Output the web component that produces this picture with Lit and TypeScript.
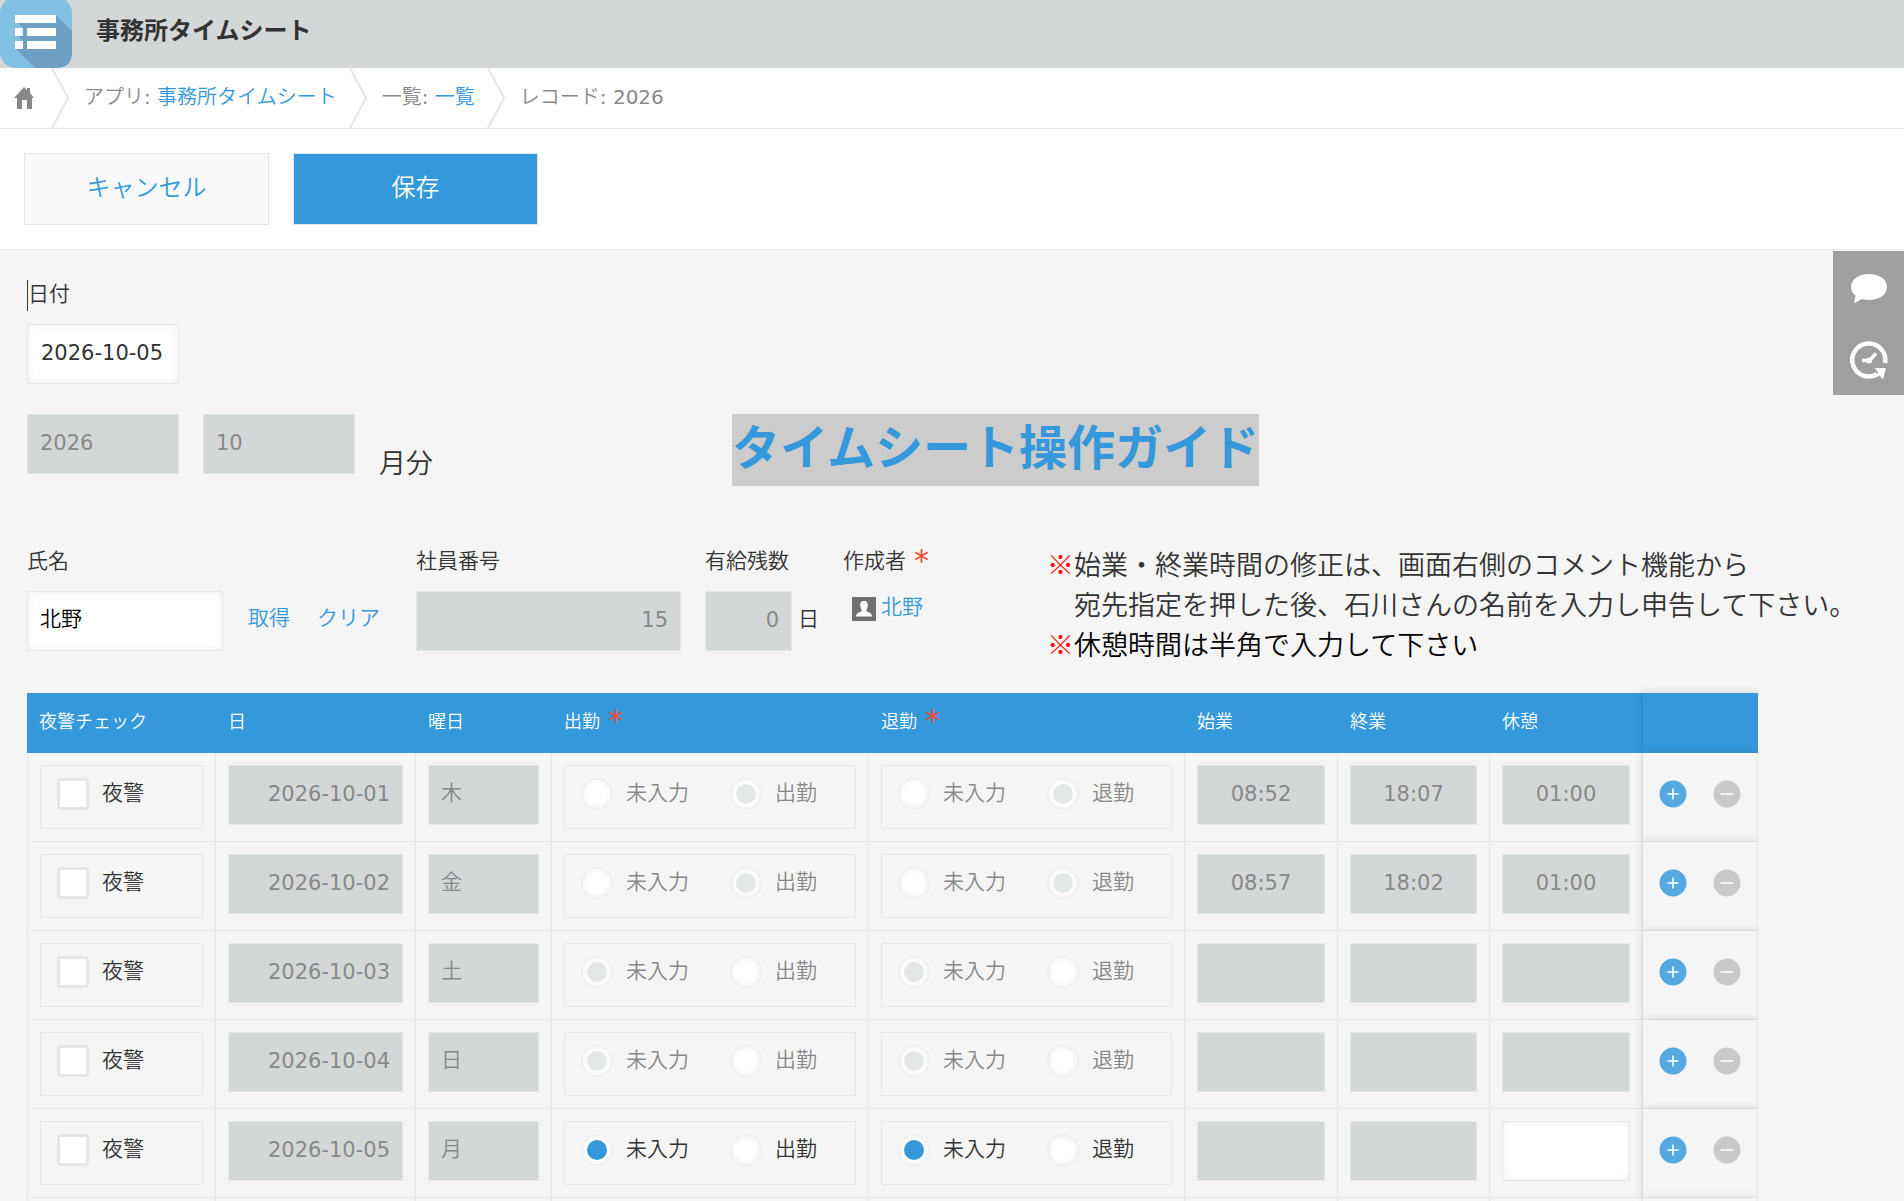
import { LitElement, html, css, svg } from "lit";
import { customElement } from "lit/decorators.js";

interface DayRow {
  date: string;
  weekday: string;
  /** true once the clock-in and clock-out have been recorded */
  done: boolean;
  editable: boolean;
  start: string;
  end: string;
  rest: string;
}

const ROWS: DayRow[] = [
  { date: "2026-10-01", weekday: "木", done: true, editable: false, start: "08:52", end: "18:07", rest: "01:00" },
  { date: "2026-10-02", weekday: "金", done: true, editable: false, start: "08:57", end: "18:02", rest: "01:00" },
  { date: "2026-10-03", weekday: "土", done: false, editable: false, start: "", end: "", rest: "" },
  { date: "2026-10-04", weekday: "日", done: false, editable: false, start: "", end: "", rest: "" },
  { date: "2026-10-05", weekday: "月", done: false, editable: true, start: "", end: "", rest: "" },
];

const appIcon = svg`
  <svg class="app-icon" viewBox="0 0 72 68" aria-hidden="true">
    <rect y="-3" width="72" height="71" rx="16" fill="#82c0e6"/>
    <path d="M56 15 72 31V52Q72 68 56 68H35L15 48 15 23Z" fill="#6c9fc3"/>
    <path d="M15 23H18L23 28H15ZM15 36H18L23 41H15Z" fill="#82c0e6"/>
    <path d="M15 15H56V23H15ZM15 28H23V36H15ZM27 28H56V36H27ZM15 41H23V49H15ZM27 41H56V49H27Z" fill="#fff"/>
  </svg>`;

const chevron = svg`
  <svg class="chevron" viewBox="0 0 18 60" aria-hidden="true">
    <path d="M1 0 17 30 1 60" fill="none" stroke="#e3e7e8" stroke-width="2"/>
  </svg>`;

@customElement("app-root")
export class AppRoot extends LitElement {
  static styles = css`
    :host {
      display: block;
      min-height: 100vh;
      overflow: hidden;
      background: #f5f5f5;
      color: #333;
      font-family: "DejaVu Sans", "Noto Sans CJK JP DemiLight", "Noto Sans CJK JP Light", "Noto Sans CJK JP", sans-serif;
      font-size: 21px;
      line-height: 31px;
    }
    *, *::before, *::after { box-sizing: border-box; }
    a { color: #3498db; text-decoration: none; }
    input, button { font: inherit; margin: 0; }

    .header { display: flex; height: 68px; background: #d4d7d7; }
    .app-icon { width: 72px; height: 68px; }
    .title {
      margin: 0; padding: 13px 24px; font-size: 24px; line-height: 36px;
      font-family: "DejaVu Sans", "Noto Sans CJK JP", sans-serif;
    }

    .crumbs {
      display: flex; height: 61px; background: #fff; color: #888;
      border-bottom: 1px solid #e3e7e8; font-size: 20px; line-height: 58px; white-space: nowrap;
    }
    .home { display: flex; align-items: center; padding: 0 17px 0 14px; }
    .home svg { width: 20px; height: 22px; }
    .chevron { width: 18px; height: 60px; flex: none; }
    .crumb { padding: 0 12px 0 15px; }

    .toolbar {
      display: flex; gap: 24px; padding: 24px; background: #fff; border-bottom: 1px solid #e3e7e8;
    }
    .button {
      width: 245px; height: 72px; padding: 0 0 2px; border: 1px solid #e3e7e8;
      background: #f7f9fa; color: #3498db; font-size: 24px;
    }
    .primary { background: #3498db; color: #fff; }

    .body { position: relative; padding: 30px 0 0 27px; }
    .side {
      position: absolute; top: 1px; right: 0; width: 71px; padding: 23px 0 16px;
      display: flex; flex-direction: column; align-items: center; gap: 37px; background: #9f9f9f;
    }
    .side button { display: block; padding: 0; border: 0; background: none; }
    .side svg { display: block; width: 38px; height: 30px; }
    .side .clock { height: 38px; }

    .label { display: block; margin-bottom: 13px; line-height: 29px; padding-bottom: 2px; }
    .caret { border-left: 1px solid #333; height: 31px; width: max-content; padding: 0; }
    .caret label { display: block; }
    .box {
      display: block; width: 100%; height: 60px; padding: 0 12px 2px; border: 1px solid #e3e7e8; border-radius: 0;
      background: #fff; color: #333; box-shadow: inset 0 0 9px #eee; outline: 0;
    }
    .box:disabled { background: #d4d7d7; color: #888; box-shadow: none; opacity: 1; }
    .box.kanji { padding: 0 12px 8px; }
    .box.name { color: #000; }
    .box.date { padding: 0 13px 3px; }
    .right { text-align: right; }
    .center { text-align: center; }
    .w-date { width: 152px; }
    .w-name { width: 196px; }
    .w-number { width: 265px; }
    .w-days { width: 87px; }
    .w-author { width: 180px; }

    .period { display: flex; gap: 24px; margin-top: 30px; }
    .suffix { font-size: 27px; line-height: 36px; padding-top: 32px; }
    .guide {
      margin-left: 275px; height: 72px; background: #ccc; font-size: 48px; font-weight: 700; line-height: 60px;
      font-family: "Noto Sans CJK JP", sans-serif;
    }

    .person { display: flex; flex-wrap: wrap; column-gap: 24px; margin-top: 61px; }
    .links { display: flex; align-items: flex-start; gap: 27px; padding: 56px 12px 0 1px; }
    .links button { padding: 0; border: 0; background: none; color: #3498db; }
    .with-unit { display: flex; align-items: center; gap: 6px; }
    .unit { padding-bottom: 4px; }
    .star {
      color: #e74c3c; padding-left: 8px; font-size: 30px; line-height: 0; vertical-align: -3px;
      font-family: "DejaVu Sans", sans-serif;
    }
    .author { display: flex; gap: 5px; padding-left: 9px; line-height: 33px; }
    .author svg { width: 24px; height: 24px; margin-top: 6px; }
    .notes {
      margin: -3px 0 0; font-size: 27px; line-height: 40px; height: 123px; white-space: nowrap;
      font-family: "Noto Sans CJK JP DemiLight", "Noto Sans CJK JP Light", "Noto Sans CJK JP", sans-serif;
    }
    .notes p { margin: 0; }
    .notes .indent { padding-left: 27px; }
    .notes .black { color: #000; }
    .notes mark { background: none; color: #f00; }

    .grid { padding: 26px 146px 0 0; }
    .table { width: 100%; table-layout: fixed; border-collapse: separate; border-spacing: 0; }
    .c1 { width: 189px; } .c2 { width: 200px; } .c3 { width: 136px; } .c4 { width: 317px; } .c5 { width: 316px; }
    .c6, .c8 { width: 153px; } .c7 { width: 152px; } .c9 { width: 115px; }
    .table th, .table .corner {
      height: 60px; padding: 0 12px 3px; background: #3498db; color: #fff; text-align: left;
      font-size: 18px; line-height: 26px; font-weight: 400;
    }
    .table td {
      height: 89px; padding: 12px; vertical-align: top;
      border-right: 1px solid #e3e7e8; border-bottom: 1px solid #e3e7e8;
    }
    .table td:first-child { border-left: 1px solid #e3e7e8; }
    .table .tail td { height: 3px; padding: 0; border-bottom: 0; }
    .table .corner { border: 0; }
    .table .ops, .table .corner {
      position: relative; box-shadow: 0 0 9px rgba(0, 0, 0, 0.14); clip-path: inset(-9px 0 0 -10px);
    }
    .table .ops { background: #f5f5f5; }

    .frame { display: flex; height: 64px; border: 1px solid #e3e7e8; padding: 12px 16px; }
    .choice { display: flex; align-items: flex-start; gap: 13px; line-height: 30px; white-space: nowrap; }
    .frame .choice + .choice { margin-left: 41px; }
    .off { color: #888; }
    .radio, .check { appearance: none; flex: none; width: 32px; height: 32px; background: #fff; }
    .radio {
      display: grid; place-items: center; border: 1px solid #e8eaea; border-radius: 50%;
      box-shadow: inset 0 0 6px #e8e8e8;
    }
    .radio:checked::before { content: ""; width: 20px; height: 20px; border-radius: 50%; background: #3498db; }
    .radio:disabled:checked::before { background: #e3e7e7; }
    .check { border: 3px solid #e6e6e6; border-radius: 3px; }

    .op-row { display: flex; gap: 26px; padding: 15px 0 0 4px; }
    .op { display: block; width: 28px; height: 28px; padding: 0; border: 0; background: none; }
    .op svg { display: block; width: 28px; height: 28px; }
  `;

  private attendance(row: DayRow, kind: string) {
    const name = `${kind}-${row.date}`;
    const off = !row.editable;
    return html`<div class="frame" role="radiogroup" aria-label=${kind}>
      <label class="choice ${off ? "off" : ""}"
        ><input class="radio" type="radio" name=${name} ?checked=${!row.done} ?disabled=${off} />未入力</label
      >
      <label class="choice ${off ? "off" : ""}"
        ><input class="radio" type="radio" name=${name} ?checked=${row.done} ?disabled=${off} />${kind}</label
      >
    </div>`;
  }

  private row(row: DayRow) {
    return html`<tr>
      <td>
        <div class="frame"><label class="choice"><input class="check" type="checkbox" />夜警</label></div>
      </td>
      <td><input class="box right" aria-label="日" .value=${row.date} disabled /></td>
      <td><input class="box kanji" aria-label="曜日" .value=${row.weekday} disabled /></td>
      <td>${this.attendance(row, "出勤")}</td>
      <td>${this.attendance(row, "退勤")}</td>
      <td><input class="box center" aria-label="始業" .value=${row.start} disabled /></td>
      <td><input class="box center" aria-label="終業" .value=${row.end} disabled /></td>
      <td><input class="box center" aria-label="休憩" .value=${row.rest} ?disabled=${!row.editable} /></td>
      <td class="ops">
        <div class="op-row">
          <button class="op" aria-label="行を追加">
            <svg viewBox="0 0 28 28">
              <circle cx="14" cy="14" r="13.5" fill="#56a9e0" />
              <path d="M14 8.500V19.500M8.500 14H19.500" stroke="#fff" stroke-width="1.600" />
            </svg>
          </button>
          <button class="op" aria-label="行を削除">
            <svg viewBox="0 0 28 28">
              <circle cx="14" cy="14" r="13.5" fill="#c9c9c9" />
              <path d="M7.500 14H20.500" stroke="#fff" stroke-width="1.600" />
            </svg>
          </button>
        </div>
      </td>
    </tr>`;
  }

  render() {
    const star = html`<span class="star">*</span>`;
    return html`
      <header class="header">
        ${appIcon}
        <h1 class="title">事務所タイムシート</h1>
      </header>
      <nav class="crumbs">
        <a class="home" href="#" aria-label="ホーム">
          <svg viewBox="0 0 20 22">
            <path d="M10 0 13 3V1H16V6L20 11H18V22H13V13H8V22H3V11H0Z" fill="#888" />
          </svg>
        </a>
        ${chevron}
        <span class="crumb">アプリ: <a href="#">事務所タイムシート</a></span>
        ${chevron}
        <span class="crumb">一覧: <a href="#">一覧</a></span>
        ${chevron}
        <span class="crumb">レコード: 2026</span>
      </nav>
      <div class="toolbar">
        <button class="button">キャンセル</button>
        <button class="button primary">保存</button>
      </div>
      <main class="body">
        <div class="w-date">
          <div class="label caret"><label for="date">日付</label></div>
          <input class="box date" id="date" .value=${"2026-10-05"} />
        </div>
        <div class="period">
          <div class="w-date"><input class="box" aria-label="年" .value=${"2026"} disabled /></div>
          <div class="w-date"><input class="box" aria-label="月" .value=${"10"} disabled /></div>
          <span class="suffix">月分</span>
          <a class="guide" href="#">タイムシート操作ガイド</a>
        </div>
        <div class="person">
          <div class="w-name">
            <label class="label" for="name">氏名</label>
            <input class="box kanji name" id="name" .value=${"北野"} />
          </div>
          <div class="links"><button>取得</button><button>クリア</button></div>
          <div class="w-number">
            <label class="label" for="number">社員番号</label>
            <input class="box right" id="number" .value=${"15"} disabled />
          </div>
          <div>
            <label class="label" for="days">有給残数</label>
            <div class="with-unit">
              <div class="w-days"><input class="box right" id="days" .value=${"0"} disabled /></div>
              <span class="unit">日</span>
            </div>
          </div>
          <div class="w-author">
            <span class="label">作成者${star}</span>
            <div class="author">
              <svg viewBox="0 0 24 24" aria-hidden="true">
                <rect width="24" height="24" fill="#6f7272" />
                <path
                  d="M12 4C15 4 16 6 15.800 9 15.600 11 14.500 12 14.300 13.500 14.300 15.500 20 15 20 19.500H4C4 15 9.700 15.500 9.700 13.500 9.500 12 8.400 11 8.200 9 8 6 9 4 12 4Z"
                  fill="#fff"
                />
              </svg>
              <a href="#">北野</a>
            </div>
          </div>
          <div class="notes">
            <p><mark>※</mark>始業・終業時間の修正は、画面右側のコメント機能から</p>
            <p class="indent">宛先指定を押した後、石川さんの名前を入力し申告して下さい。</p>
            <p class="black"><mark>※</mark>休憩時間は半角で入力して下さい</p>
          </div>
        </div>
        <div class="grid">
          <table class="table">
            <colgroup>
              ${[1, 2, 3, 4, 5, 6, 7, 8, 9].map((n) => html`<col class="c${n}" />`)}
            </colgroup>
            <thead>
              <tr>
                <th>夜警チェック</th>
                <th>日</th>
                <th>曜日</th>
                <th>出勤${star}</th>
                <th>退勤${star}</th>
                <th>始業</th>
                <th>終業</th>
                <th>休憩</th>
                <td class="corner"></td>
              </tr>
            </thead>
            <tbody>
              ${ROWS.map((r) => this.row(r))}
              <tr class="tail">
                ${[1, 2, 3, 4, 5, 6, 7, 8].map(() => html`<td></td>`)}
                <td class="ops"></td>
              </tr>
            </tbody>
          </table>
        </div>
        <aside class="side">
          <button aria-label="コメント">
            <svg viewBox="0 0 38 30">
              <path
                d="M19 0C29.500 0 37 5.500 37 13S29.500 26 19 26C16.500 26 14 25.600 11.800 25L4 29.500 5.500 21.500C2.500 19.300 1 16.300 1 13 1 5.500 8.500 0 19 0Z"
                fill="#fff"
              />
            </svg>
          </button>
          <button aria-label="変更履歴">
            <svg class="clock" viewBox="0 0 38 38">
              <path d="M35 22A16.500 16.500 0 1 0 27 33.300" fill="none" stroke="#fff" stroke-width="4.500" />
              <path d="M24.500 27 36 27 33 38.500 29.500 34.500 26 36.500 28 31Z" fill="#fff" />
              <path d="M12 19.500H19.500L26 12.500" fill="none" stroke="#fff" stroke-width="3.500" />
              <circle cx="19" cy="19.500" r="3" fill="#fff" />
            </svg>
          </button>
        </aside>
      </main>
    `;
  }
}
